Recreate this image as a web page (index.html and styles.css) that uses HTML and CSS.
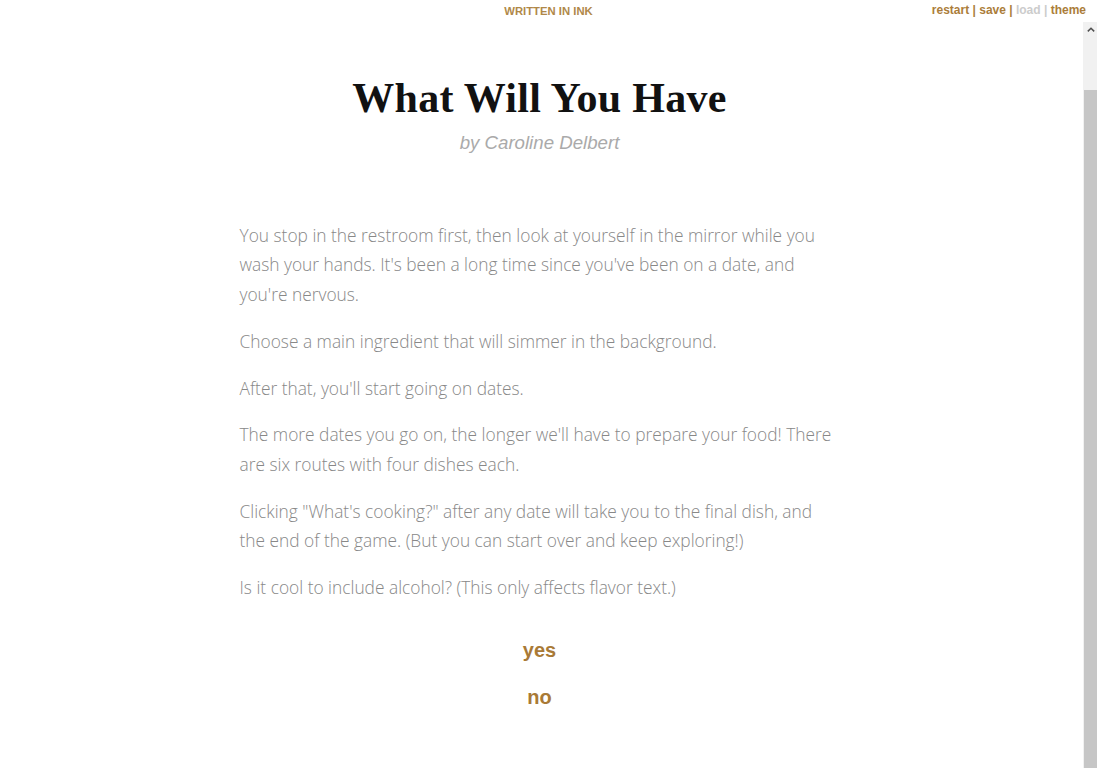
FILE: index.html
```html
<!DOCTYPE html>
<html lang="en">
<head>
<meta charset="utf-8">
<title>What Will You Have</title>
<link rel="stylesheet" href="styles.css">
</head>
<body>
<header class="topbar">
  <div class="topbar-side"></div>
  <div class="brand">WRITTEN IN INK</div>
  <nav class="controls">
    <a class="ctl">restart</a><a class="ctl">save</a><a class="ctl disabled">load</a><a class="ctl">theme</a>
  </nav>
</header>
<div class="frame">
  <main class="story">
    <div class="title-block">
      <h1 class="title">What Will You Have</h1>
      <h2 class="byline">by Caroline Delbert</h2>
    </div>
    <div class="passage">
      <p>You stop in the restroom first, then look at yourself in the mirror while you wash your hands. It's been a long time since you've been on a date, and you're nervous.</p>
      <p>Choose a main ingredient that will simmer in the background.</p>
      <p>After that, you'll start going on dates.</p>
      <p>The more dates you go on, the longer we'll have to prepare your food! There are six routes with four dishes each.</p>
      <p>Clicking "What's cooking?" after any date will take you to the final dish, and the end of the game. (But you can start over and keep exploring!)</p>
      <p>Is it cool to include alcohol? (This only affects flavor text.)</p>
      <p class="choice first"><a>yes</a></p>
      <p class="choice"><a>no</a></p>
    </div>
  </main>
  <div class="scrollbar">
    <div class="sb-arrow">
      <svg width="8" height="5" viewBox="0 0 8 5"><path d="M0.8 4.4 L4 1.2 L7.2 4.4" fill="none" stroke="#505050" stroke-width="1.5"/></svg>
    </div>
    <div class="sb-track"></div>
    <div class="sb-thumb"></div>
  </div>
</div>
</body>
</html>
```
FILE: styles.css
```css
html, body {
  margin: 0;
  padding: 0;
  height: 100%;
  background: #fff;
}
body {
  display: flex;
  flex-direction: column;
  overflow: hidden;
}
.topbar {
  height: 22px;
  flex: none;
  display: grid;
  grid-template-columns: 1fr auto 1fr;
  align-items: start;
  font-family: "Liberation Sans", Arial, sans-serif;
  font-weight: 700;
  line-height: 14px;
}
.brand {
  padding-top: 4px;
  font-size: 11.3px;
  color: #b08849;
}
.controls {
  justify-self: end;
  padding-top: 3px;
  padding-right: 11px;
  font-size: 12px;
  color: #ab7d3a;
}
.ctl {
  color: #ab7d3a;
}
.ctl:not(:last-child)::after {
  content: " | ";
  white-space: pre;
}
.ctl.disabled {
  color: #cccccc;
}
.frame {
  flex: 1;
  display: flex;
  min-height: 0;
}
.story {
  flex: 1;
  padding-right: 4px;
  display: flex;
  flex-direction: column;
  align-items: center;
}
.title-block {
  width: 600px;
  text-align: center;
}
.title {
  margin: 52px 0 0;
  font-family: "Liberation Serif", "Times New Roman", serif;
  font-weight: 700;
  font-size: 42px;
  letter-spacing: 0.3px;
  line-height: 48px;
  color: #111;
}
.byline {
  margin: 9px 0 0;
  font-family: "Liberation Sans", Arial, sans-serif;
  font-style: italic;
  font-weight: 400;
  font-size: 18.67px;
  line-height: 24px;
  color: #aaaaaa;
}
.passage {
  width: 600px;
  padding-top: 66px;
  display: flex;
  flex-direction: column;
  gap: 17.33px;
}
.passage p {
  margin: 0;
  font-family: "Open Sans", sans-serif;
  font-weight: 300;
  font-size: 17.33px;
  line-height: 29.47px;
  color: #888888;
}
.passage p.choice {
  text-align: center;
  line-height: 30px;
}
.passage p.choice.first {
  margin-top: 15.5px;
}
.choice a {
  font-family: "Liberation Sans", Arial, sans-serif;
  font-weight: 700;
  font-size: 20px;
  color: #a97a36;
}
.scrollbar {
  width: 14px;
  flex: none;
  display: flex;
  flex-direction: column;
  background: #f1f1f1;
}
.sb-arrow {
  height: 14px;
  display: flex;
  justify-content: center;
  align-items: center;
  padding-left: 1px;
}
.sb-arrow svg {
  display: block;
}
.sb-track {
  height: 54px;
}
.sb-thumb {
  flex: 1;
  margin-left: 1px;
  background: #c6c6c6;
}
```
